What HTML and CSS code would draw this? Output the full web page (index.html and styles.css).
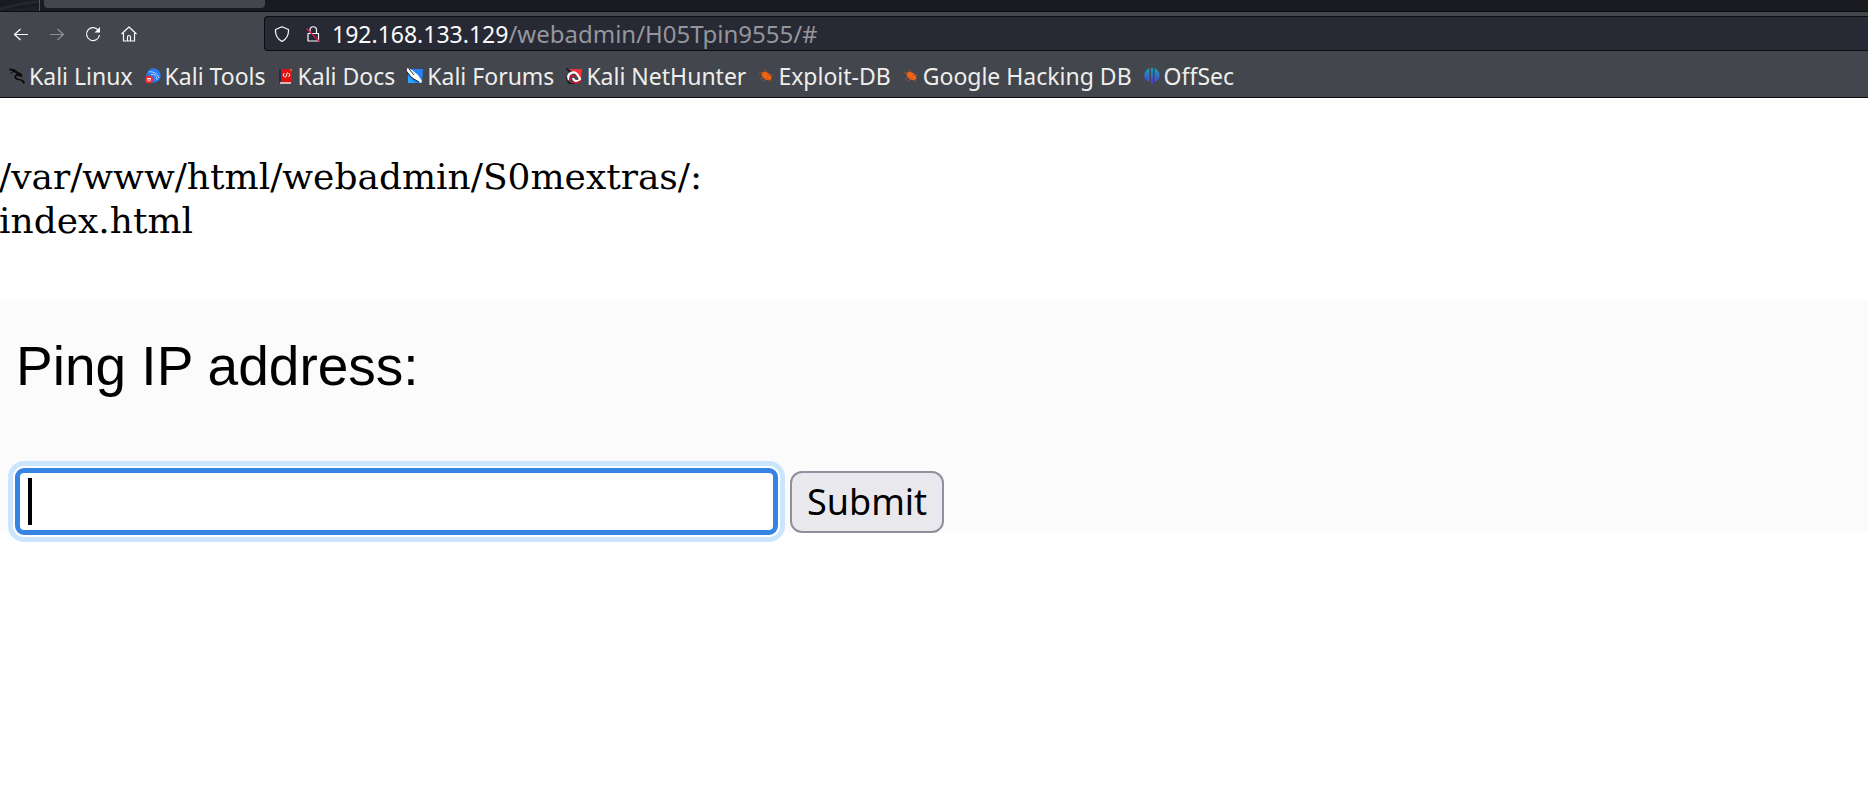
FILE: index.html
```html
<!DOCTYPE html>
<html lang="en">
<head>
<meta charset="utf-8">
<title>Ping IP address</title>
<link rel="stylesheet" href="styles.css">
</head>
<body>
<header class="browser">
  <div class="tabstrip">
    <svg class="wallpaper" viewBox="0 0 44 11" aria-hidden="true"><path d="M0 7 L24 2 L39 0 V3 L18 6 L0 11Z" fill="#24262a"/><path d="M5 11 L34 6 L39 8 V11Z" fill="#1f2125"/><path d="M39.500 0V11" stroke="#55585d"/></svg>
    <div class="tab"></div>
  </div>
  <nav class="toolbar" aria-label="Navigation">
    <div class="nav-buttons">
      <button class="nav-button" type="button" aria-label="Back"><svg viewBox="0 0 16 16"><path d="M15 8.500H1.500M7.500 3L1.500 8.500L7.500 14"/></svg></button>
      <button class="nav-button nav-button-off" type="button" aria-label="Forward" disabled><svg viewBox="0 0 16 16"><path d="M1 8.500H14.500M8.500 3L14.500 8.500L8.500 14"/></svg></button>
      <button class="nav-button" type="button" aria-label="Reload"><svg viewBox="0 0 16 16"><path d="M13.500 4.500A6.500 6.500 0 1 0 14.500 9"/><path d="M15 1V6.500H9.500Z" fill="#fbfbfb" stroke="none"/></svg></button>
      <button class="nav-button" type="button" aria-label="Home"><svg viewBox="0 0 16 16"><path d="M.5 8L8 1L15.500 8M2.500 7V15H13.500V7M6.500 15V11A1.500 1.500 0 0 1 9.500 11V15"/></svg></button>
    </div>
    <div class="urlbar">
      <svg class="url-icon" viewBox="0 0 16 16" aria-hidden="true"><path d="M8 .8L14.500 3.500C14.800 9 12.500 13 8 15.500C3.500 13 1.200 9 1.500 3.500Z"/></svg>
      <svg class="url-icon" viewBox="0 0 16 16" aria-hidden="true"><path d="M3 7.500H13.500V15H3ZM5 7.500V4A3 3 0 0 1 11.500 4V7.500"/><path d="M1.500 2.500L14.500 15.500" stroke="#e3174b"/></svg>
      <span class="url"><span class="host">192.168.133.129</span>/webadmin/H05Tpin9555/#</span>
    </div>
  </nav>
  <nav class="bookmarks" aria-label="Bookmarks">
    <a class="bookmark" href="#"><svg viewBox="0 0 16 16"><path d="M0 1C4 0 7 2 9 4C13 5 14 7 13 9L9 8C6 8 7 10 10 11C13 11 15 12 16 15L14 16C14 13 11 12 8 12C4 10 5 7 8 6L5 4L0 6L4 3L0 2Z" fill="#090a0c"/></svg>Kali Linux</a>
    <a class="bookmark" href="#"><svg viewBox="0 0 16 16"><circle cx="8.500" cy="7.500" r="7.200" fill="#257cf5"/><path d="M4 4C8 3 13 6 14 10M6 7C9 5 12 8 12 12" fill="none" stroke="#b9d8ff"/><circle cx="4" cy="11.500" r="4" fill="#ee2630"/><path d="M2 10.500H6M3 11V13.500M5 11V13.500" stroke="#fff" fill="none"/></svg>Kali Tools</a>
    <a class="bookmark" href="#"><svg viewBox="0 0 16 16"><path d="M1 1H3V15H1Z" fill="#262b4d"/><path d="M3 1H14V14H3Z" fill="#df1111"/><path d="M2 14H13V16H2Z" fill="#d3b8b5"/><path d="M11 1H14V4Z" fill="#f15a19"/><path d="M6.500 5L5 7L6.500 9M10.500 5L12 7L10.500 9M9.500 4.500L7.500 9.500" stroke="#fff" fill="none"/></svg>Kali Docs</a>
    <a class="bookmark" href="#"><svg viewBox="0 0 16 16"><path d="M1 1H16L15 15H1Z" fill="#2381fa"/><path d="M1 8L8 15H1Z" fill="#29a4ff"/><path d="M0 0L5 2L11 7L15 13L14 15L9 12L4 9L0 3Z" fill="#fff"/><path d="M0 4L5 10L12 14M2 1L7 7" stroke="#202734" fill="none"/></svg>Kali Forums</a>
    <a class="bookmark" href="#"><svg viewBox="0 0 16 16"><path d="M3 1H16L15 12L9 5Z" fill="#f5303b"/><path d="M0 0L4 4M0 9L3 15L9 16" stroke="#17181d" stroke-width="1.500" fill="none"/><path d="M3 12C0 5 8 3 11 6L14 11C13 14 8 14 7 10" fill="none" stroke="#fff" stroke-width="2.200"/><path d="M4 13C3 8 6 7 9 8M5 14L10 15L15 13" fill="none" stroke="#df1637" stroke-width="1.500"/></svg>Kali NetHunter</a>
    <a class="bookmark" href="#"><svg viewBox="0 0 16 16"><ellipse cx="8.500" cy="8" rx="5.500" ry="3.500" transform="rotate(35 8.500 8)" fill="#f36411"/><path d="M1 5H6M6 1L9 5M2 11L7 9M5 13L10 10M9 7H15M11 11L13 14" stroke="#b65227" stroke-width=".8" fill="none"/></svg>Exploit-DB</a>
    <a class="bookmark" href="#"><svg viewBox="0 0 16 16"><ellipse cx="8.500" cy="8" rx="5.500" ry="3.500" transform="rotate(35 8.500 8)" fill="#f36411"/><path d="M1 5H6M6 1L9 5M2 11L7 9M5 13L10 10M9 7H15M11 11L13 14" stroke="#b65227" stroke-width=".8" fill="none"/></svg>Google Hacking DB</a>
    <a class="bookmark" href="#"><svg viewBox="0 0 16 16"><defs><linearGradient id="offsec" x2="0" y2="1"><stop stop-color="#10a5b5"/><stop offset="1" stop-color="#5632d4"/></linearGradient></defs><path d="M5.500 0V14C-1 12-2 4 5.500 0ZM10.500 0V14C17 12 18 4 10.500 0ZM7 0H9V16H7Z" fill="url(#offsec)"/></svg>OffSec</a>
  </nav>
</header>
<main>
  <p class="listing">/var/www/html/webadmin/S0mextras/:<br>index.html</p>
  <form class="ping">
    <label class="ping-label" for="ip">Ping IP address:</label>
    <div class="ping-row">
      <div class="field"><input class="ping-input" id="ip" type="text"><span class="caret"></span></div>
      <button class="submit" type="submit">Submit</button>
    </div>
  </form>
</main>
</body>
</html>
```
FILE: styles.css
```css
* { box-sizing: border-box; }
body {
  min-height: 100vh;
  margin: 0;
  background: #fff;
  color: #000;
}
.browser {
  background: #43464d;
  border-bottom: 1px solid #0c0d10;
  font-family: "Noto Sans", sans-serif;
}
.tabstrip {
  display: flex;
  align-items: flex-start;
  height: 12px;
  background: #1a1b20;
  border-bottom: 1px solid #0c0d10;
}
.wallpaper { width: 44px; height: 11px; }
.tab {
  width: 221px;
  height: 8px;
  background: #43464d;
  border-radius: 0 0 4px 4px;
}
.toolbar {
  display: flex;
  align-items: center;
  padding-top: 4px;
}
.nav-buttons {
  display: flex;
  gap: 20px;
  width: 264px;
  padding-left: 13px;
}
.nav-button {
  width: 16px;
  height: 16px;
  padding: 0;
  border: 0;
  background: none;
}
.nav-button-off { opacity: 0.4; }
.nav-button svg, .url-icon {
  display: block;
  width: 16px;
  height: 16px;
  fill: none;
  stroke: #fbfbfb;
  stroke-width: 1.2;
  stroke-linejoin: round;
}
.urlbar {
  flex: 1;
  display: flex;
  align-items: center;
  gap: 15px;
  height: 35px;
  padding-left: 9px;
  background: #272935;
  border: 1px solid #0c0d10;
  border-right: 0;
  border-radius: 4px 0 0 4px;
}
.url {
  margin-left: -4px;
  font-size: 24px;
  line-height: 32px;
  color: #95969c;
  white-space: nowrap;
}
.host {
  color: #fbfbfb;
  font-size: 23px;
}
.bookmarks {
  display: flex;
  align-items: center;
  gap: 12px;
  height: 46px;
  padding: 3px 9px 0;
}
.bookmark {
  display: flex;
  align-items: center;
  gap: 4px;
  color: #eeeeec;
  font-size: 23px;
  line-height: 32px;
  text-decoration: none;
  white-space: nowrap;
}
.bookmark svg { width: 16px; height: 16px; }
.listing {
  margin: 0 0 0 -1px;
  padding: 57px 0;
  font-family: "DejaVu Serif", serif;
  font-size: 36px;
  line-height: 44px;
}
.ping {
  height: 232px;
  padding: 32px 15px 0;
  background: #fbfbfb;
}
.ping-label {
  display: block;
  padding-left: 1px;
  font-family: "Liberation Sans", Arial, sans-serif;
  font-size: 55px;
  line-height: 68px;
}
.ping-row {
  display: flex;
  align-items: center;
  gap: 12px;
  padding-top: 68px;
}
.field {
  position: relative;
  width: 763px;
}
.ping-input {
  display: block;
  width: 100%;
  height: 67px;
  padding: 5px 8px;
  border: 5px solid #3584e4;
  border-radius: 9px;
  outline: 5px solid #cce5ff;
  outline-offset: 2px;
  box-shadow: 0 0 0 2px #fff;
  background: #fff;
  font-family: "Noto Sans", sans-serif;
  font-size: 36px;
}
.caret {
  position: absolute;
  left: 13px;
  top: 10px;
  width: 4px;
  height: 47px;
  background: #000;
}
.submit {
  height: 62px;
  padding: 0 15px;
  border: 2px solid #8f8f9d;
  border-radius: 12px;
  background: #e9e9ed;
  color: #000;
  font-family: "Noto Sans", sans-serif;
  font-size: 36px;
}
```
